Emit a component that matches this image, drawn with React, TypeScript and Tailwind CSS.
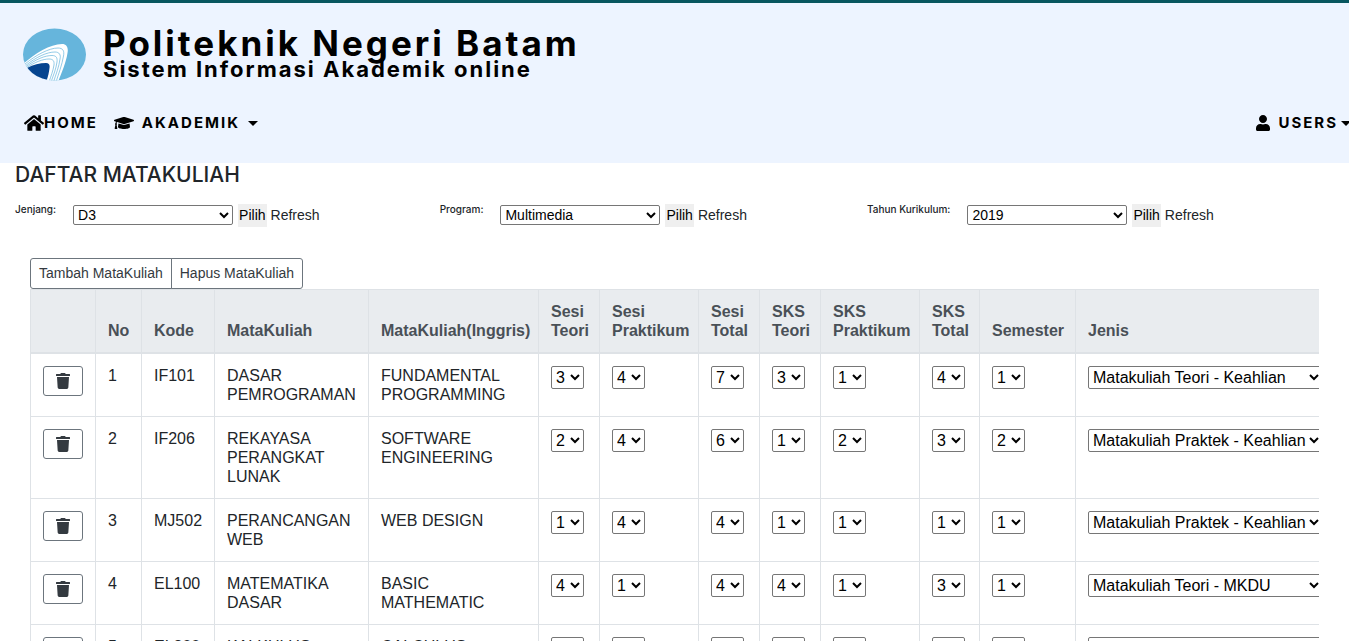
import React from 'react';
import { FaGraduationCap, FaHome, FaTrash, FaUser } from 'react-icons/fa';

interface Course {
    no: number;
    kode: string;
    nama: string;
    inggris: string;
    values: number[];
    jenis: string;
}

const columns = [
    'No',
    'Kode',
    'MataKuliah',
    'MataKuliah(Inggris)',
    'Sesi Teori',
    'Sesi Praktikum',
    'Sesi Total',
    'SKS Teori',
    'SKS Praktikum',
    'SKS Total',
    'Semester',
    'Jenis',
];

const numberColumns = columns.slice(4, 11);

const columnWidths = [
    'w-[65px]',
    'w-[46px]',
    'w-[73px]',
    'w-[154px]',
    'w-[170px]',
    'w-[61px]',
    'w-[99px]',
    'w-[61px]',
    'w-[61px]',
    'w-[99px]',
    'w-[60px]',
    'w-[96px]',
    'w-[270px]',
];

const jenisOptions = [
    'Matakuliah Teori - Keahlian',
    'Matakuliah Praktek - Keahlian',
    'Matakuliah Teori - MKDU',
];

const courses: Course[] = [
    { no: 1, kode: 'IF101', nama: 'DASAR PEMROGRAMAN', inggris: 'FUNDAMENTAL PROGRAMMING', values: [3, 4, 7, 3, 1, 4, 1], jenis: jenisOptions[0] },
    { no: 2, kode: 'IF206', nama: 'REKAYASA PERANGKAT LUNAK', inggris: 'SOFTWARE ENGINEERING', values: [2, 4, 6, 1, 2, 3, 2], jenis: jenisOptions[1] },
    { no: 3, kode: 'MJ502', nama: 'PERANCANGAN WEB', inggris: 'WEB DESIGN', values: [1, 4, 4, 1, 1, 1, 1], jenis: jenisOptions[1] },
    { no: 4, kode: 'EL100', nama: 'MATEMATIKA DASAR', inggris: 'BASIC MATHEMATIC', values: [4, 1, 4, 4, 1, 3, 1], jenis: jenisOptions[2] },
    { no: 5, kode: 'EL200', nama: 'KALKULUS', inggris: 'CALCULUS', values: [4, 1, 4, 4, 1, 3, 1], jenis: jenisOptions[2] },
];

const selectClass = 'border border-[#767676] rounded-[2px] bg-white text-black';

const Logo: React.FC = () => (
    <svg viewBox="0 0 64 53" className="w-16 h-[53px]" aria-hidden="true">
        <defs>
            <clipPath id="logo-oval">
                <ellipse cx="32.5" cy="26.5" rx="31.5" ry="26" />
            </clipPath>
        </defs>
        <g clipPath="url(#logo-oval)">
            <rect width="64" height="53" fill="#66b5dc" />
            <path d="M0 37C12 26 28 16 40 16C45 16 46.500 20 45.500 25C44 35 39 46 36 54L0 54Z" fill="#fff" />
            <g fill="none" stroke="#66b5dc" strokeWidth="0.7">
                <path d="M3 36C14 27 27 20 36 20C41 20 42.500 23 41.500 28C40 37 36.500 46 34 54" />
                <path d="M3 38C14 29 25 24 33 24C37.500 24 39 27 38 31C37 39 34 46 31.500 54" />
                <path d="M3 39.500C14 31 23 27.500 30 27.500C34.500 27.500 35.500 30 35 34C34 41 31.500 47 29 54" />
                <path d="M4 40C13 34 21 31 27 31C31 31 32.500 33 32 37C31 43 29 48 27 54" />
            </g>
            <path d="M5 40C11 36.500 18 35 24 35C27 35 28 37 27.500 40C27 45 26 49 24 54L0 54Z" fill="#06458f" />
        </g>
    </svg>
);

const Caret: React.FC = () => (
    <span className="inline-block border-x-[5px] border-x-transparent border-t-[5px] border-t-black" />
);

interface FilterProps {
    id: string;
    label: string;
    value: string;
}

const Filter: React.FC<FilterProps> = ({ id, label, value }) => (
    <div className="flex flex-auto items-start">
        <label htmlFor={id} className="mr-[17px] text-[10px] leading-[10px] font-medium font-['Inter',sans-serif]">
            {label}
        </label>
        <div className="flex items-start text-[14px] leading-[21px]">
            <select id={id} defaultValue={value} className={`mt-px h-5 w-40 leading-[17px] ${selectClass}`}>
                <option>{value}</option>
            </select>
            <button type="button" className="ml-[5px] bg-[#efefef] p-px text-black">Pilih</button>
            <a href="#refresh" className="ml-1 py-px">Refresh</a>
        </div>
    </div>
);

const Header: React.FC = () => (
    <header className="overflow-hidden border-t-[3px] border-[#07565f] bg-[#edf4ff] pb-7 text-black font-['Inter',sans-serif]">
        <div className="flex items-start px-[22px] pt-[25px]">
            <Logo />
            <div className="ml-[17px] font-bold">
                <h1 className="text-[35px] leading-[30px] tracking-[3px]">Politeknik Negeri Batam</h1>
                <p className="text-[22px] leading-[22px] tracking-[2px]">Sistem Informasi Akademik online</p>
            </div>
        </div>
        <nav className="mt-[30px] flex items-center justify-between pl-6 text-[15px] leading-6 font-bold tracking-[2px]">
            <div className="flex items-center gap-4">
                <a href="#home" className="flex items-center">
                    <FaHome className="h-[18px] w-5" />HOME
                </a>
                <button type="button" className="flex items-center gap-2">
                    <FaGraduationCap className="h-5 w-5" />AKADEMIK <Caret />
                </button>
            </div>
            <button type="button" className="-mr-[2px] flex items-center gap-[3px]">
                <FaUser className="mr-1 h-4 w-4" />USERS<Caret />
            </button>
        </nav>
    </header>
);

const CourseTable: React.FC = () => (
    <div className="overflow-x-auto">
        <table className="w-full min-w-[1315px] table-fixed border-collapse text-[16px] leading-[19px]">
            <colgroup>
                {columnWidths.map((width, index) => (
                    <col key={index} className={width} />
                ))}
            </colgroup>
            <thead className="bg-[#e9ecef] text-[#495057]">
                <tr>
                    <th className="border border-b-2 border-[#dee2e6] p-3" aria-label="Aksi" />
                    {columns.map((column) => (
                        <th key={column} className="border border-b-2 border-[#dee2e6] py-3 pr-1.5 pl-3 text-left align-bottom font-bold">
                            {column}
                        </th>
                    ))}
                </tr>
            </thead>
            <tbody>
                {courses.map((course) => (
                    <tr key={course.no} className="align-top">
                        <td className="border border-[#dee2e6] p-3">
                            <button
                                type="button"
                                aria-label={`Hapus ${course.nama}`}
                                className="flex h-[30px] w-10 items-center justify-center rounded-[3px] border border-[#6c757d] text-[#343a40]"
                            >
                                <FaTrash className="h-4 w-[14px]" />
                            </button>
                        </td>
                        <td className="border border-[#dee2e6] p-3">{course.no}</td>
                        <td className="border border-[#dee2e6] py-3 pl-3">{course.kode}</td>
                        <td className="border border-[#dee2e6] py-3 pl-3">{course.nama}</td>
                        <td className="border border-[#dee2e6] p-3">{course.inggris}</td>
                        {course.values.map((value, index) => (
                            <td key={numberColumns[index]} className="border border-[#dee2e6] p-3">
                                <select aria-label={numberColumns[index]} defaultValue={value} className={`block h-[23px] w-[33px] ${selectClass}`}>
                                    {[1, 2, 3, 4, 5, 6, 7].map((option) => (
                                        <option key={option}>{option}</option>
                                    ))}
                                </select>
                            </td>
                        ))}
                        <td className="border border-[#dee2e6] p-3">
                            <select aria-label="Jenis" defaultValue={course.jenis} className={`block h-[23px] ${selectClass}`}>
                                {jenisOptions.map((option) => (
                                    <option key={option}>{option}</option>
                                ))}
                            </select>
                        </td>
                    </tr>
                ))}
            </tbody>
        </table>
    </div>
);

const App: React.FC = () => {
    return (
        <div className="overflow-x-hidden bg-white text-[#212529] font-['Liberation_Sans',Arial,sans-serif]">
            <Header />
            <main className="px-[15px]">
                <h2 className="text-[21px] leading-6 font-medium font-['Inter',sans-serif]">DAFTAR MATAKULIAH</h2>
                <div className="mt-[17px] flex">
                    <Filter id="jenjang" label="Jenjang:" value="D3" />
                    <Filter id="program" label="Program:" value="Multimedia" />
                    <Filter id="tahun" label="Tahun Kurikulum:" value="2019" />
                </div>
                <div className="mt-[31px] px-[15px]">
                    <div className="flex text-[14px] leading-[21px] text-[#343a40]">
                        <button type="button" className="rounded-l-[3px] border border-[#6c757d] px-2 py-1">Tambah MataKuliah</button>
                        <button type="button" className="-ml-px rounded-r-[3px] border border-[#6c757d] px-2 py-1">Hapus MataKuliah</button>
                    </div>
                    <CourseTable />
                </div>
            </main>
        </div>
    );
};

export default App;
